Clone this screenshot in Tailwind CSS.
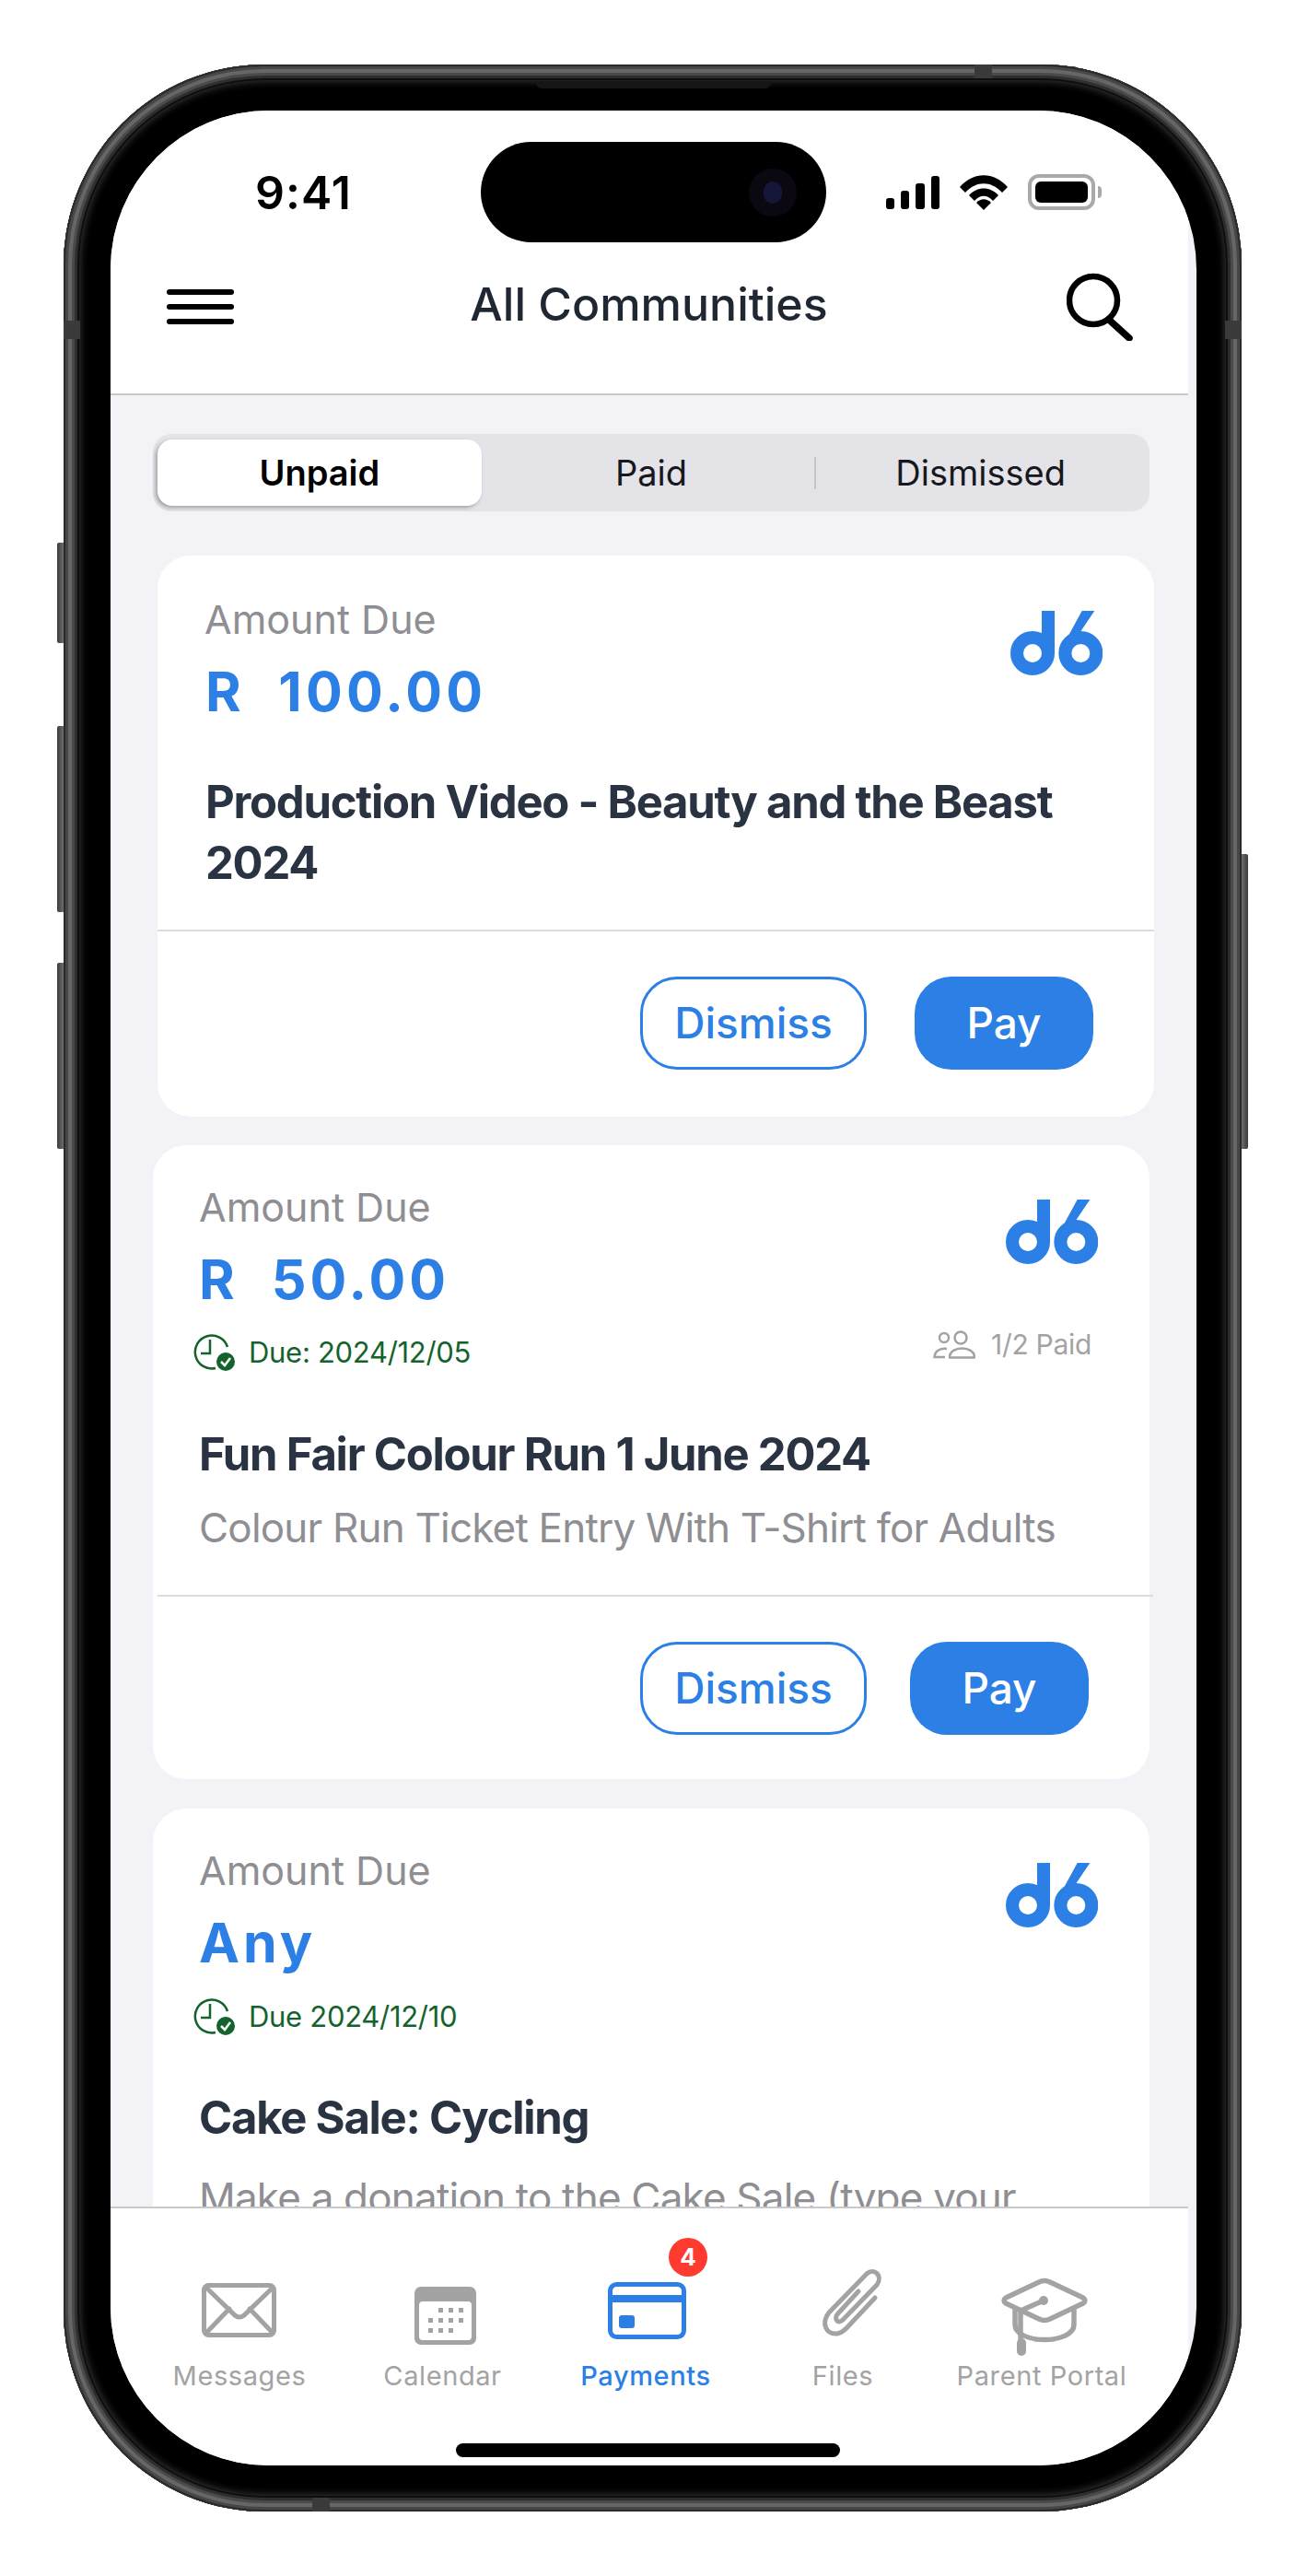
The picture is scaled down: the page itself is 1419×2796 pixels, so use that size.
<!DOCTYPE html>
<html lang="en">
<head>
    <meta charset="UTF-8">
    <meta name="viewport" content="width=device-width, initial-scale=1.0">
    <title>Payments</title>
    <script src="https://cdn.jsdelivr.net/npm/@tailwindcss/browser@4"></script>
</head>
<body class="bg-white font-['Inter',sans-serif] overflow-hidden">
    <div class="w-[1419px] h-[2796px] pt-[70px] pl-[69px]">
        <!-- Phone frame -->
        <div class="relative w-[1279px] h-[2656px]">
            <!-- Side buttons -->
            <div class="absolute left-[-7px] top-[519px] w-[8px] h-[109px] rounded-l-[2px] bg-linear-to-r from-[#3c3c3c] to-[#777]"></div>
            <div class="absolute left-[-7px] top-[718px] w-[8px] h-[202px] rounded-l-[2px] bg-linear-to-r from-[#3c3c3c] to-[#777]"></div>
            <div class="absolute left-[-7px] top-[975px] w-[8px] h-[202px] rounded-l-[2px] bg-linear-to-r from-[#3c3c3c] to-[#777]"></div>
            <div class="absolute right-[-7px] top-[857px] w-[8px] h-[320px] rounded-r-[2px] bg-linear-to-l from-[#3c3c3c] to-[#777]"></div>

            <div class="relative w-full h-full rounded-[218px] bg-black shadow-[inset_0_0_0_2px_#2b2b2b,inset_0_0_0_5px_#474747,inset_0_0_0_9px_#666,inset_0_0_0_12px_#4a4a4a,inset_0_0_0_15px_#2e2e2e,inset_0_0_0_17px_#0e0e0e,inset_0_0_9px_18px_#3a3a3a] pt-[50px] pb-[50px] pl-[51px] pr-[49px]">
                <!-- Screen -->
                <div class="relative w-full h-full rounded-[172px] overflow-hidden bg-[#f2f2f7]">
                    <div class="w-[1170px] h-full flex flex-col">
                        <!-- Header -->
                        <div class="relative h-[309px] shrink-0 bg-white border-b-2 border-[#c9c9cc]">
                            <div class="flex items-center justify-between pt-[67px] pl-[157px] pr-[94px] h-[110px]">
                                <span class="text-[50px] leading-[50px] font-semibold text-black tracking-[1px]">9:41</span>
                                <div class="flex items-center gap-[22px]">
                                    <svg class="w-[58px] h-[36px]" viewBox="0 0 58 36" fill="#000">
                                        <rect x="0" y="24" width="9" height="12" rx="3"/>
                                        <rect x="16" y="16" width="9" height="20" rx="3"/>
                                        <rect x="32" y="8" width="10" height="28" rx="3"/>
                                        <rect x="49" y="0" width="9" height="36" rx="3"/>
                                    </svg>
                                    <svg class="w-[52px] h-[38px]" viewBox="0 0 52 38" fill="#000">
                                        <path d="M0 13 C15 -4 37 -4 52 13 L46 19 C34 6 18 6 6 19 Z"/>
                                        <path d="M10 22 C19 12 33 12 42 22 L36 28 C30 21 22 21 16 28 Z"/>
                                        <path d="M26 38 L18 30 C23 25 29 25 34 30 Z"/>
                                    </svg>
                                    <div class="flex items-center">
                                        <div class="w-[73px] h-[39px] rounded-[12px] border-[4px] border-[#a9a9a9] p-[4px]">
                                            <div class="w-full h-full rounded-[6px] bg-black"></div>
                                        </div>
                                        <div class="w-[4px] h-[13px] ml-[3px] rounded-r-[4px] bg-[#a9a9a9]"></div>
                                    </div>
                                </div>
                            </div>
                            <div class="flex items-center justify-between pl-[61px] pr-[60px] mt-[58px] h-[90px]">
                                <div class="flex flex-col gap-[10px] w-[73px]">
                                    <div class="h-[6px] rounded-full bg-black"></div>
                                    <div class="h-[6px] rounded-full bg-black"></div>
                                    <div class="h-[6px] rounded-full bg-black"></div>
                                </div>
                                <h1 class="text-[50px] leading-[60px] font-medium text-[#1f2733] -mt-[6px] -ml-[3px]">All Communities</h1>
                                <svg class="w-[72px] h-[74px]" viewBox="0 0 72 74" fill="none" stroke="#000" stroke-width="6.5" stroke-linecap="round">
                                    <circle cx="29" cy="30" r="26"/>
                                    <path d="M46 51 L68 71" stroke-width="7.5"/>
                                </svg>
                            </div>
                        </div>

                        <!-- Content -->
                        <div class="flex-1 min-h-0 overflow-hidden pt-[42px]">
                            <div class="ml-[46px] w-[1082px] h-[84px] rounded-[20px] bg-[#e3e3e8] grid grid-cols-3 text-[38px] text-[#16181d]">
                                <div class="my-[6px] ml-[5px] mr-[4px] rounded-[16px] bg-white shadow-[-2px_2px_4px_rgba(0,0,0,0.3)] flex items-center justify-center font-semibold text-black">Unpaid</div>
                                <div class="flex items-center justify-center">Paid</div>
                                <div class="relative flex items-center justify-center pr-[6px]">
                                    Dismissed
                                    <div class="absolute left-[-3px] top-[25px] w-[2px] h-[35px] bg-[#c4c4c8]"></div>
                                </div>
                            </div>

                            <!-- Card 1 -->
                            <div class="ml-[51px] mt-[48px] w-[1082px] h-[609px] rounded-[36px] bg-white">
                                <div class="relative px-[52px] pt-[43px] h-[406px]">
                                    <div class="-ml-[1px] text-[43px] leading-[52px] text-[#8e8e93]">Amount Due</div>
                                    <div class="mt-[18px] text-[59px] leading-[70px] font-bold tracking-[4.2px] text-[#2c7fe4] whitespace-pre">R  100.00</div>
                                    <svg class="absolute right-[56px] top-[60px] w-[100px] h-[70px]" viewBox="0 0 300 210" fill="#2c7fe4">
                                        <circle cx="72" cy="138" r="51" fill="none" stroke="#2c7fe4" stroke-width="42"/>
                                        <rect x="102" y="0" width="42" height="138"/>
                                        <circle cx="229" cy="138" r="51" fill="none" stroke="#2c7fe4" stroke-width="42"/>
                                        <polygon points="233,0 274,0 228,68 190,90 158,138"/>
                                    </svg>
                                    <h2 class="mt-[52px] text-[49px] leading-[66px] tracking-[-1.25px] font-bold text-[#2a3342]">Production Video - Beauty and the Beast 2024</h2>
                                </div>
                                <div class="border-t-2 border-[#dcdcdf] flex justify-end gap-[52px] pr-[66px] pt-[49px]">
                                    <button class="w-[246px] h-[101px] rounded-[40px] border-[3px] border-[#2c7fe4] bg-white text-[46px] font-medium text-[#2c7fe4]">Dismiss</button>
                                    <button class="w-[194px] h-[101px] rounded-[40px] bg-[#2c7fe4] text-[46px] font-medium text-white">Pay</button>
                                </div>
                            </div>

                            <!-- Card 2 -->
                            <div class="ml-[46px] mt-[31px] w-[1082px] h-[688px] rounded-[36px] bg-white">
                                <div class="relative px-[50px] pt-[41px] h-[488px]">
                                    <div class="text-[43px] leading-[52px] text-[#8e8e93]">Amount Due</div>
                                    <div class="mt-[18px] text-[59px] leading-[70px] font-bold tracking-[4px] text-[#2c7fe4] whitespace-pre">R  50.00</div>
                                    <div class="mt-[21px] -ml-[7px] flex items-center gap-[15px] h-[46px] text-[31px] tracking-[-0.3px] text-[#14632c]">
                                        <svg class="w-[46px] h-[40px]" viewBox="0 0 46 40" fill="none" stroke="#14632c" stroke-width="2.5">
                                            <path d="M38 14 A18 18 0 1 0 25 37"/>
                                            <path d="M19 6 V21 H9"/>
                                            <circle cx="36" cy="30" r="10" fill="#14632c" stroke="none"/>
                                            <path d="M31 30 L35 34 L41 26" stroke="#fff" stroke-width="2.5"/>
                                        </svg>
                                        <span>Due: 2024/12/05</span>
                                    </div>
                                    <svg class="absolute right-[56px] top-[59px] w-[100px] h-[70px]" viewBox="0 0 300 210" fill="#2c7fe4">
                                        <circle cx="72" cy="138" r="51" fill="none" stroke="#2c7fe4" stroke-width="42"/>
                                        <rect x="102" y="0" width="42" height="138"/>
                                        <circle cx="229" cy="138" r="51" fill="none" stroke="#2c7fe4" stroke-width="42"/>
                                        <polygon points="233,0 274,0 228,68 190,90 158,138"/>
                                    </svg>
                                    <div class="absolute right-[63px] top-[194px] flex items-center gap-[17px] text-[30px] tracking-[-0.3px] text-[#a3a3a3]">
                                        <svg class="w-[46px] h-[31px]" viewBox="0 0 46 31" fill="none" stroke="#a3a3a3" stroke-width="2.5">
                                            <circle cx="12" cy="8" r="5"/>
                                            <circle cx="30" cy="8" r="6.5"/>
                                            <path d="M15 20 C8 19 2 22 1.5 29 H13"/>
                                            <path d="M18 29.5 C18 16 45 16 45 29.5 Z" stroke-linejoin="round"/>
                                        </svg>
                                        <span>1/2 Paid</span>
                                    </div>
                                    <h2 class="mt-[55px] text-[49px] leading-[66px] tracking-[-1.25px] font-bold text-[#2a3342]">Fun Fair Colour Run 1 June 2024</h2>
                                    <p class="mt-[13px] text-[44px] leading-[66px] tracking-[-0.8px] text-[#8e8e93] whitespace-nowrap">Colour Run Ticket Entry With T-Shirt for Adults</p>
                                </div>
                                <div class="ml-[5px] -mr-[4px] border-t-2 border-[#dcdcdf] flex justify-end gap-[47px] pr-[70px] pt-[49px]">
                                    <button class="w-[246px] h-[101px] rounded-[40px] border-[3px] border-[#2c7fe4] bg-white text-[46px] font-medium text-[#2c7fe4]">Dismiss</button>
                                    <button class="w-[194px] h-[101px] rounded-[40px] bg-[#2c7fe4] text-[46px] font-medium text-white">Pay</button>
                                </div>
                            </div>

                            <!-- Card 3 -->
                            <div class="ml-[46px] mt-[32px] w-[1082px] h-[688px] rounded-t-[36px] bg-white">
                                <div class="relative px-[50px] pt-[41px]">
                                    <div class="text-[43px] leading-[52px] text-[#8e8e93]">Amount Due</div>
                                    <div class="mt-[18px] text-[59px] leading-[70px] font-bold tracking-[4px] text-[#2c7fe4]">Any</div>
                                    <div class="mt-[22px] -ml-[7px] flex items-center gap-[15px] h-[46px] text-[31px] tracking-[-0.3px] text-[#14632c]">
                                        <svg class="w-[46px] h-[40px]" viewBox="0 0 46 40" fill="none" stroke="#14632c" stroke-width="2.5">
                                            <path d="M38 14 A18 18 0 1 0 25 37"/>
                                            <path d="M19 6 V21 H9"/>
                                            <circle cx="36" cy="30" r="10" fill="#14632c" stroke="none"/>
                                            <path d="M31 30 L35 34 L41 26" stroke="#fff" stroke-width="2.5"/>
                                        </svg>
                                        <span>Due 2024/12/10</span>
                                    </div>
                                    <svg class="absolute right-[56px] top-[59px] w-[100px] h-[70px]" viewBox="0 0 300 210" fill="#2c7fe4">
                                        <circle cx="72" cy="138" r="51" fill="none" stroke="#2c7fe4" stroke-width="42"/>
                                        <rect x="102" y="0" width="42" height="138"/>
                                        <circle cx="229" cy="138" r="51" fill="none" stroke="#2c7fe4" stroke-width="42"/>
                                        <polygon points="233,0 274,0 228,68 190,90 158,138"/>
                                    </svg>
                                    <h2 class="mt-[54px] text-[49px] leading-[66px] tracking-[-1.25px] font-bold text-[#2a3342]">Cake Sale: Cycling</h2>
                                    <p class="mt-[20px] text-[44px] leading-[66px] tracking-[-0.8px] text-[#8e8e93] whitespace-nowrap">Make a donation to the Cake Sale (type your</p>
                                </div>
                            </div>
                        </div>

                        <!-- Tab bar -->
                        <div class="relative z-10 h-[281px] shrink-0 bg-white border-t-2 border-[#c9c9cc] flex pl-[30px] pt-[63px] text-[29px] leading-[36px] tracking-[0.6px] text-[#a3a3a3]">
                            <div class="w-[220px] flex flex-col items-center">
                                <svg class="w-[100px] h-[100px]" viewBox="0 0 100 100" fill="none" stroke="#a3a3a3" stroke-width="5" stroke-linecap="round">
                                    <rect x="11.5" y="20.5" width="76" height="54" rx="5"/>
                                    <path d="M14 23 L45 53 Q50 57 55 53 L86 23"/>
                                    <path d="M14 72 L39 46 M86 72 L61 46"/>
                                </svg>
                                <span class="mt-[1px] whitespace-nowrap">Messages</span>
                            </div>
                            <div class="w-[221px] flex flex-col items-center">
                                <svg class="w-[100px] h-[100px]" viewBox="0 0 100 100" fill="#a3a3a3">
                                    <rect x="19" y="22" width="67" height="63" rx="7"/>
                                    <rect x="24" y="38" width="57" height="42" rx="4" fill="#fff"/>
                                    <path d="M45 45h5v5h-5zM56 45h5v5h-5zM67 45h5v5h-5zM34 56h5v5h-5zM45 56h5v5h-5zM56 56h5v5h-5zM67 56h5v5h-5zM34 67h5v5h-5zM45 67h5v5h-5zM56 67h5v5h-5z"/>
                                </svg>
                                <span class="mt-[1px] whitespace-nowrap">Calendar</span>
                            </div>
                            <div class="relative w-[220px] flex flex-col items-center text-[#2c7fe4] font-medium">
                                <svg class="w-[100px] h-[100px]" viewBox="0 0 100 100" fill="none" stroke="#2c7fe4" stroke-width="5">
                                    <rect x="11.5" y="19.5" width="80" height="57" rx="7"/>
                                    <rect x="10" y="31" width="84" height="8" fill="#2c7fe4" stroke="none"/>
                                    <rect x="21" y="53" width="17" height="14" rx="3" fill="#2c7fe4" stroke="none"/>
                                </svg>
                                <span class="mt-[1px] whitespace-nowrap">Payments</span>
                                <div class="absolute left-[135px] top-[-31px] w-[42px] h-[42px] rounded-full bg-[#ff3b30] flex items-center justify-center text-[26px] font-bold text-white tracking-normal">4</div>
                            </div>
                            <div class="w-[208px] flex flex-col items-center">
                                <svg class="w-[100px] h-[100px]" viewBox="0 0 100 100" fill="none" stroke="#a3a3a3" stroke-width="5" stroke-linecap="round" stroke-linejoin="round">
                                    <path d="M67 27 L44 52 C40 57 45 63 50 58 L87 20 C94 10 84 1 76 8 L35 50 C26 62 32 74 44 73 C49 72 52 69 54 67 L85 34"/>
                                </svg>
                                <span class="mt-[1px] whitespace-nowrap">Files</span>
                            </div>
                            <div class="w-[224px] flex flex-col items-center">
                                <svg class="w-[100px] h-[100px]" viewBox="0 0 100 100" fill="none" stroke="#a3a3a3" stroke-width="5.5" stroke-linecap="round" stroke-linejoin="round">
                                    <path d="M47 17 Q53 14 59 17 L95 34 Q99 37 95 40 L59 57 Q53 60 47 57 L11 40 Q7 37 11 34 Z"/>
                                    <path d="M21 47 V63 C21 85 85 85 85 63 V47"/>
                                    <path d="M52 37 L27 48 V78"/>
                                    <circle cx="52" cy="37" r="5" fill="#a3a3a3" stroke="none"/>
                                    <rect x="23" y="78" width="10" height="19" rx="5" fill="#a3a3a3" stroke="none"/>
                                </svg>
                                <span class="mt-[1px] whitespace-nowrap">Parent Portal</span>
                            </div>
                        </div>
                    </div>

                    <!-- Home indicator -->
                    <div class="absolute left-[375px] top-[2532px] w-[417px] h-[15px] rounded-full bg-black z-20"></div>
                    <!-- Dynamic island -->
                    <div class="absolute left-[402px] top-[34px] w-[375px] h-[109px] rounded-full bg-black z-20">
                        <div class="absolute left-[291px] top-[29px] w-[52px] h-[52px] rounded-full bg-[#0b0812]">
                            <div class="absolute left-[16px] top-[14px] w-[20px] h-[24px] rounded-full bg-[#14163a]"></div>
                        </div>
                    </div>
                </div>
            </div>

            <!-- Antenna bands and earpiece -->
            <div class="absolute left-0 top-[278px] w-[18px] h-[20px] bg-[#3a3a3a]"></div>
            <div class="absolute right-0 top-[278px] w-[18px] h-[20px] bg-[#3a3a3a]"></div>
            <div class="absolute left-[989px] top-0 w-[19px] h-[15px] bg-[#3a3a3a]"></div>
            <div class="absolute left-[270px] bottom-0 w-[19px] h-[15px] bg-[#3a3a3a]"></div>
            <div class="absolute left-[513px] top-[18px] w-[255px] h-[8px] rounded-b-[6px] bg-[#161616]"></div>
        </div>
    </div>
</body>
</html>
